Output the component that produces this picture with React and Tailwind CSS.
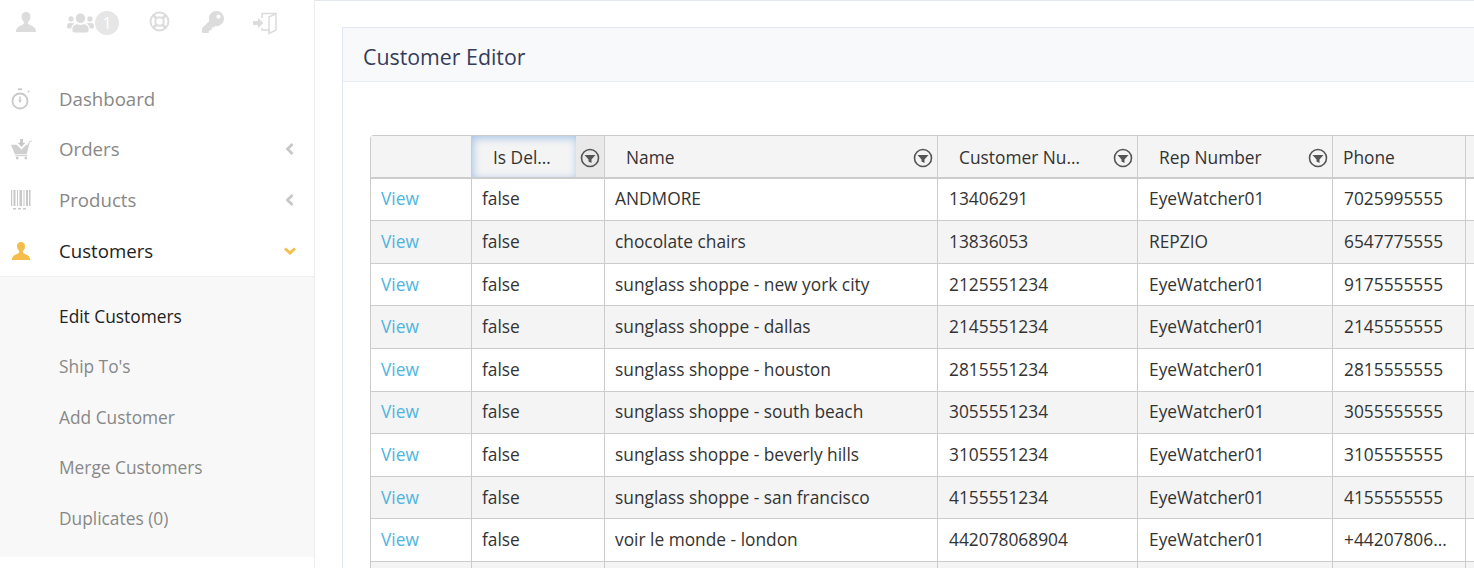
import React from "react";
import { FaKey, FaUsers } from "react-icons/fa";

const UserIcon = ({ className }) => (
  <svg viewBox="0 0 22 22" className={className} fill="currentColor">
    <path d="M11 1c-3 0-4.600 2.200-4.400 5 .1 2 1 3.700 2.100 4.700.4.400.4 1.600 0 2.100C7.200 14.600 1 15.300 1 20.500V21h20v-.5c0-5.200-6.200-5.900-7.700-7.700-.4-.5-.4-1.700 0-2.100 1.100-1 2-2.700 2.100-4.700C15.600 3.200 14 1 11 1z" />
  </svg>
);

const LifeRingIcon = ({ className }) => (
  <svg viewBox="0 0 22 22" className={className} fill="none" stroke="currentColor">
    <circle cx="11" cy="11" r="9.400" strokeWidth="2" />
    <circle cx="11" cy="11" r="4.400" strokeWidth="2" />
    <path d="M4.500 4.500l3.200 3.200M17.500 4.500l-3.200 3.200M4.500 17.500l3.200-3.200M17.500 17.500l-3.200-3.200" strokeWidth="3" />
  </svg>
);

const SignInIcon = ({ className }) => (
  <svg viewBox="0 0 24 24" className={className}>
    <path d="M0 10h5V7l5.500 5L5 17v-3H0z" fill="currentColor" />
    <path d="M9 7V2.500h14V19l-7 3.500V19H9v-2" fill="none" stroke="currentColor" strokeWidth="1.500" />
    <path d="M22.500 3L16 6v15" fill="none" stroke="currentColor" strokeWidth="1.500" />
  </svg>
);

const StopwatchIcon = ({ className }) => (
  <svg viewBox="0 0 20 22" className={className} fill="none" stroke="currentColor">
    <circle cx="9" cy="13" r="7.500" strokeWidth="1.800" />
    <path d="M9 8.500v3" strokeWidth="1.500" />
    <path d="M7.300 11.500h3.400L9 15.500z" fill="currentColor" stroke="none" />
    <path d="M7 1.300h4" strokeWidth="1.800" />
    <circle cx="17.500" cy="3.500" r="1" fill="currentColor" stroke="none" />
  </svg>
);

const BasketIcon = ({ className }) => (
  <svg viewBox="0 0 22 22" className={className} fill="currentColor">
    <path d="M9.500 0h3v4h2.500L11 8.500 7 4h2.500z" />
    <path d="M0 6h6l5 5 5-5h1.500L19 2.500 22 1.500v1l-2.400.8L16.500 16H4z" opacity="0.85" />
    <path d="M4.500 17h12.500v1H4.500z" />
    <circle cx="6.500" cy="20" r="1.400" />
    <circle cx="15.500" cy="20" r="1.400" />
  </svg>
);

const BarcodeIcon = ({ className }) => (
  <svg viewBox="0 0 20 20" className={className} fill="currentColor">
    <path d="M0 0h1.200v16H0zM2.500 0h2v16h-2zM6 0h1v16H6zM8.500 0h2.500v16H8.500zM12.500 0h1v16h-1zM15 0h2v16h-2zM18 0h1.500v16H18zM2 18h3v1.500H2zM7 18h3v1.500H7zM12 18h3v1.500h-3z" />
  </svg>
);

const ChevronLeft = () => (
  <svg viewBox="0 0 9 12" className="w-[9px] h-[12px] text-[#c8c8c8] mr-[2px]" fill="none" stroke="currentColor" strokeWidth="2.800">
    <path d="M7.500 1L2.500 6l5 5" />
  </svg>
);

const ChevronDown = () => (
  <svg viewBox="0 0 12 8" className="w-[12px] h-[8px] text-[#f7bd4a]" fill="none" stroke="currentColor" strokeWidth="2.800">
    <path d="M1 1.500l5 4.500 5-4.500" />
  </svg>
);

const FilterIcon = () => (
  <svg viewBox="0 0 20 20" className="w-[20px] h-[20px] text-[#555]">
    <circle cx="10" cy="10" r="8.500" fill="none" stroke="currentColor" strokeWidth="1.600" />
    <path d="M4.500 7h11L11.500 11.500V15l-3-1.500v-2z" fill="currentColor" />
  </svg>
);

const columns = "grid grid-cols-[101px_133px_333px_200px_195px_133px_100px]";

const rows = [
  ["ANDMORE", "13406291", "EyeWatcher01", "7025995555"],
  ["chocolate chairs", "13836053", "REPZIO", "6547775555"],
  ["sunglass shoppe - new york city", "2125551234", "EyeWatcher01", "9175555555"],
  ["sunglass shoppe - dallas", "2145551234", "EyeWatcher01", "2145555555"],
  ["sunglass shoppe - houston", "2815551234", "EyeWatcher01", "2815555555"],
  ["sunglass shoppe - south beach", "3055551234", "EyeWatcher01", "3055555555"],
  ["sunglass shoppe - beverly hills", "3105551234", "EyeWatcher01", "3105555555"],
  ["sunglass shoppe - san francisco", "4155551234", "EyeWatcher01", "4155555555"],
  ["voir le monde - london", "442078068904", "EyeWatcher01", "+44207806..."],
];

const NavItem = ({ icon: Icon, label, active, open, iconClass }) => (
  <div className={`h-[50.7px] pl-[11px] pr-[18px] flex items-center text-[18.67px] ${active ? "text-[#222]" : "text-[#888]"}`}>
    <span className={`w-[48px] shrink-0 ${active ? "text-[#f7bd4a]" : "text-[#c8c8c8]"}`}>
      <Icon className={iconClass} />
    </span>
    <span className="flex-1">{label}</span>
    {open === false && <ChevronLeft />}
    {open === true && <ChevronDown />}
  </div>
);

const SubItem = ({ label, active }) => (
  <div className={`h-[50.5px] pl-[59px] flex items-center text-[17.33px] ${active ? "text-[#222]" : "text-[#888]"}`}>
    {label}
  </div>
);

const HeaderCell = ({ label, focused }) => (
  <div className="flex items-stretch border-r border-[#ccc] min-w-0">
    <div className={`flex-1 flex items-center min-w-0 pl-[21px] pr-[24px] pt-[4px] ${focused ? "shadow-[inset_1px_2px_9px_#a3c3e6]" : ""}`}>
      <span className="truncate">{label}</span>
    </div>
    <div className={`w-[28px] shrink-0 flex items-center justify-center pt-[4px] ${focused ? "bg-[#e9e9e9]" : ""}`}>
      <FilterIcon />
    </div>
  </div>
);

export default function App() {
  return (
    <div className="h-[568px] w-[1474px] overflow-hidden flex bg-white font-['Open_Sans',sans-serif]">
      <aside className="w-[315px] shrink-0 border-r border-[#ececec]">
        <div className="h-[73.3px] flex items-start pt-[11px] pl-[15px] text-[#dcdcdc]">
          <UserIcon className="w-[22px] h-[22px]" />
          <div className="ml-[30px] flex items-center">
            <FaUsers className="w-[27px] h-[22px]" />
            <span className="ml-[1px] w-[24px] h-[24px] rounded-full bg-[#e6e6e6] text-white text-[16px] flex items-center justify-center">1</span>
          </div>
          <LifeRingIcon className="ml-[30px] w-[21px] h-[21px]" />
          <FaKey className="ml-[32px] w-[22px] h-[22px]" />
          <SignInIcon className="ml-[29px] w-[24px] h-[24px]" />
        </div>
        <NavItem icon={StopwatchIcon} label="Dashboard" iconClass="w-[20px] h-[22px]" />
        <NavItem icon={BasketIcon} label="Orders" open={false} iconClass="w-[21px] h-[21px]" />
        <NavItem icon={BarcodeIcon} label="Products" open={false} iconClass="w-[20px] h-[20px]" />
        <NavItem icon={UserIcon} label="Customers" active open={true} iconClass="w-[20px] h-[20px]" />
        <div className="border-t border-[#eee] bg-[#f8f8f8] h-[281px] pt-[14.6px]">
          <SubItem label="Edit Customers" active />
          <SubItem label="Ship To's" />
          <SubItem label="Add Customer" />
          <SubItem label="Merge Customers" />
          <SubItem label="Duplicates (0)" />
        </div>
      </aside>
      <main className="flex-1 min-w-0 border-t border-[#e2e7ef] pt-[26px] pl-[27px]">
        <section className="border-l border-t border-[#e2e7ef] h-full">
          <div className="h-[54px] bg-[#f8f9fb] border-b border-[#e9edf3] pl-[20px] pt-[5px] flex items-center text-[21.33px] text-[#343d5c]">
            Customer Editor
          </div>
          <div className="pt-[53px] pl-[27px] text-[17.33px] text-[#333]">
            <div className="w-[1200px] border-l border-t border-[#ccc] rounded-tl-[4px]">
              <div className={`${columns} h-[42.6px] bg-[#f4f4f4] border-b-2 border-[#ccc]`}>
                <div className="border-r border-[#ccc]" />
                <HeaderCell label="Is Deleted" focused />
                <HeaderCell label="Name" />
                <HeaderCell label="Customer Number" />
                <HeaderCell label="Rep Number" />
                <div className="border-r border-[#ccc] flex items-center pl-[10px] pt-[4px]">Phone</div>
                <div />
              </div>
              {rows.map((row, i) => (
                <div key={row[1]} className={`${columns} h-[42.6px] border-b border-[#ccc] ${i % 2 ? "bg-[#f4f4f4]" : "bg-white"}`}>
                  <div className="border-r border-[#ccc] flex items-center pl-[10px] text-[#4fb5e0]">View</div>
                  <div className="border-r border-[#ccc] flex items-center pl-[10px]">false</div>
                  {row.map((cell, j) => (
                    <div key={j} className={`border-r border-[#ccc] flex items-center whitespace-nowrap overflow-hidden ${j === 0 ? "pl-[10px]" : "pl-[11px]"}`}>
                      {cell}
                    </div>
                  ))}
                  <div />
                </div>
              ))}
              {/* next row is cut off by the window */}
              <div className={`${columns} h-[42.6px] bg-[#f4f4f4]`}>
                <div className="border-r border-[#ccc]" />
                <div className="border-r border-[#ccc]" />
                <div className="border-r border-[#ccc]" />
                <div className="border-r border-[#ccc]" />
                <div className="border-r border-[#ccc]" />
                <div className="border-r border-[#ccc]" />
                <div />
              </div>
            </div>
          </div>
        </section>
      </main>
    </div>
  );
}
